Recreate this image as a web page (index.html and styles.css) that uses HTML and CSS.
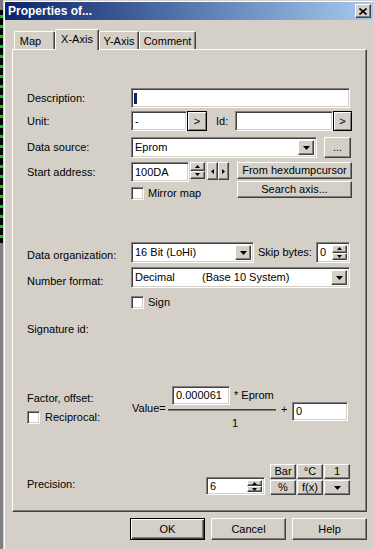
FILE: index.html
```html
<!DOCTYPE html>
<html>
<head>
<meta charset="utf-8">
<link rel="stylesheet" href="styles.css">
</head>
<body>
<div class="screen">
  <div class="strip"></div>
  <div class="window">
    <div class="frame">
      <div class="titlebar">
        <span class="title">Properties of...</span>
        <div class="close raised"><svg width="8" height="7" viewBox="0 0 8 7"><path d="M0.5 0.5 L7.5 6.5 M7.5 0.5 L0.5 6.5" stroke="#000" stroke-width="1.6" fill="none"/></svg></div>
      </div>
      <div class="client">
        <div class="tabs">
          <div class="tab tab-map">Map</div>
          <div class="tab active tab-x">X-Axis</div>
          <div class="tab tab-y">Y-Axis</div>
          <div class="tab tab-c">Comment</div>
        </div>
        <div class="panel">
          <div class="row r-desc">
            <div class="lbl">Description:</div>
            <div class="sunken field w-desc"><span class="caret"></span></div>
          </div>
          <div class="row r-unit">
            <div class="lbl">Unit:</div>
            <div class="sunken field w-unit"><span class="txt">-</span></div>
            <div class="btn focus w-gt">&gt;</div>
            <div class="lbl-id">Id:</div>
            <div class="sunken field w-id"></div>
            <div class="btn focus w-gt2">&gt;</div>
          </div>
          <div class="row r-ds">
            <div class="lbl">Data source:</div>
            <div class="sunken combo w-ds">
              <span class="txt">Eprom</span>
              <div class="raised ddbtn"><svg width="7" height="4" viewBox="0 0 7 4"><polygon points="0,0 7,0 3.5,4" fill="#000"/></svg></div>
            </div>
            <div class="btn raised w-dots">...</div>
          </div>
          <div class="row r-start">
            <div class="lbl lbl-start">Start address:</div>
            <div class="start-block">
              <div class="start-line">
                <div class="sunken field w-start"><span class="txt">100DA</span></div>
                <div class="spin ext">
                  <div class="raised sbtn"><svg width="5" height="3" viewBox="0 0 5 3"><polygon points="2.5,0 5,3 0,3" fill="#000"/></svg></div>
                  <div class="raised sbtn"><svg width="5" height="3" viewBox="0 0 5 3"><polygon points="0,0 5,0 2.5,3" fill="#000"/></svg></div>
                </div>
                <div class="raised arrow a-left"><svg width="3" height="5" viewBox="0 0 3 5"><polygon points="3,0 0,2.5 3,5" fill="#000"/></svg></div>
                <div class="raised arrow"><svg width="3" height="5" viewBox="0 0 3 5"><polygon points="0,0 3,2.5 0,5" fill="#000"/></svg></div>
              </div>
              <div class="check-line">
                <div class="sunken chk"></div><span class="chk-lbl">Mirror map</span>
              </div>
            </div>
            <div class="side-btns">
              <div class="btn raised w-side">From hexdumpcursor</div>
              <div class="btn raised w-side">Search axis...</div>
            </div>
          </div>
          <div class="row r-org">
            <div class="lbl lbl-low">Data organization:</div>
            <div class="sunken combo w-org">
              <span class="txt">16 Bit (LoHi)</span>
              <div class="raised ddbtn"><svg width="7" height="4" viewBox="0 0 7 4"><polygon points="0,0 7,0 3.5,4" fill="#000"/></svg></div>
            </div>
            <div class="lbl-skip">Skip bytes:</div>
            <div class="sunken combo w-skip">
              <span class="txt">0</span>
              <div class="spin">
                <div class="raised sbtn"><svg width="5" height="3" viewBox="0 0 5 3"><polygon points="2.5,0 5,3 0,3" fill="#000"/></svg></div>
                <div class="raised sbtn"><svg width="5" height="3" viewBox="0 0 5 3"><polygon points="0,0 5,0 2.5,3" fill="#000"/></svg></div>
              </div>
            </div>
          </div>
          <div class="row r-num">
            <div class="lbl lbl-low2">Number format:</div>
            <div class="sunken combo w-num">
              <span class="txt"><span class="dec">Decimal</span>(Base 10 System)</span>
              <div class="raised ddbtn"><svg width="7" height="4" viewBox="0 0 7 4"><polygon points="0,0 7,0 3.5,4" fill="#000"/></svg></div>
            </div>
          </div>
          <div class="row r-sign">
            <div class="lbl"></div>
            <div class="sunken chk"></div><span class="chk-lbl">Sign</span>
          </div>
          <div class="row r-sig">
            <div class="lbl">Signature id:</div>
          </div>
          <div class="row r-factor">
            <div class="factor-left">
              <div class="f-lbl">Factor, offset:</div>
              <div class="recip"><div class="sunken chk"></div><span class="recip-lbl">Reciprocal:</span></div>
            </div>
            <div class="value-eq">Value=</div>
            <div class="fraction">
              <div class="numer">
                <div class="sunken field w-factor"><span class="txt">0.000061</span></div>
                <span class="eprom">* Eprom</span>
              </div>
              <div class="fline"></div>
              <div class="denom">1</div>
            </div>
            <div class="plus">+</div>
            <div class="sunken field w-offset"><span class="txt">0</span></div>
          </div>
          <div class="row r-prec">
            <div class="lbl lbl-prec">Precision:</div>
            <div class="sunken combo w-prec">
              <span class="txt">6</span>
              <div class="spin">
                <div class="raised sbtn"><svg width="5" height="3" viewBox="0 0 5 3"><polygon points="2.5,0 5,3 0,3" fill="#000"/></svg></div>
                <div class="raised sbtn"><svg width="5" height="3" viewBox="0 0 5 3"><polygon points="0,0 5,0 2.5,3" fill="#000"/></svg></div>
              </div>
            </div>
            <div class="units">
              <div class="raised ubtn">Bar</div>
              <div class="raised ubtn">°C</div>
              <div class="raised ubtn">1</div>
              <div class="raised ubtn">%</div>
              <div class="raised ubtn">f(x)</div>
              <div class="raised ubtn"><svg width="7" height="4" viewBox="0 0 7 4"><polygon points="0,0 7,0 3.5,4" fill="#000"/></svg></div>
            </div>
          </div>
        </div>
        <div class="buttons">
          <div class="btn default dbtn">OK</div>
          <div class="btn raised dbtn">Cancel</div>
          <div class="btn raised dbtn">Help</div>
        </div>
      </div>
    </div>
  </div>
</div>
</body>
</html>
```

FILE: styles.css
```css
* { box-sizing: border-box; }
html, body { margin: 0; padding: 0; }
body {
  width: 373px; height: 549px; overflow: hidden;
  background: #d4d0c8;
  font-family: "Liberation Sans", Arial, sans-serif;
  font-size: 11px; color: #000;
}
.screen { display: flex; height: 549px; }
.strip {
  width: 3px; flex: none;
  background:
    linear-gradient(to bottom, #7a7a7a 0 10px, transparent 10px 243px, #808080 243px),
    repeating-linear-gradient(to bottom, #000 0 5px, #19c319 5px 8px, #000 8px 10px);
}
.window { flex: 1; border-left: 1px solid #d4d0c8; border-top: 1px solid #d4d0c8; }
.frame { height: 100%; border-left: 1px solid #fff; border-top: 1px solid #fff; }

.raised {
  background: #d4d0c8;
  border: 1px solid; border-color: #fff #404040 #404040 #fff;
  box-shadow: inset -1px -1px #808080;
}
.sunken {
  background: #fff;
  border: 1px solid; border-color: #808080 #fff #fff #808080;
  box-shadow: inset 1px 1px #404040, inset -1px -1px #d4d0c8;
}

.titlebar {
  height: 18px;
  background: linear-gradient(to right, #0a246a, #a6caf0);
  display: flex; align-items: center; justify-content: space-between;
  padding: 0 2px 0 3px;
}
.title { color: #fff; font-weight: bold; font-size: 12px; }
.close { width: 16px; height: 14px; display: flex; align-items: center; justify-content: center; }

.client { padding-left: 7px; }
.tabs { display: flex; align-items: flex-end; height: 29px; padding-left: 2px; }
.tab {
  height: 18px;
  border: 1px solid; border-bottom: none;
  border-color: #fff #404040 transparent #fff;
  box-shadow: inset -1px 0 #808080;
  border-radius: 2px 2px 0 0;
  display: flex; align-items: center; justify-content: center;
  background: #d4d0c8;
}
.tab.active { height: 21px; margin-bottom: -1px; position: relative; z-index: 1; padding-bottom: 3px; }
.tab-map { width: 41px; padding-right: 8px; }
.tab-x { width: 44px; }
.tab-y { width: 40px; }
.tab-c { width: 57px; }

.panel {
  width: 355px; height: 463px;
  border: 1px solid; border-color: #fff #404040 #404040 #fff;
  box-shadow: inset -1px -1px #808080;
  padding-left: 14px;
  display: flex; flex-direction: column;
}
.row { display: flex; align-items: center; flex: none; }
.lbl { width: 104px; flex: none; line-height: 13px; }

.field { height: 20px; display: flex; align-items: center; flex: none; }
.txt { padding-left: 3px; line-height: 13px; white-space: pre; }
.combo { height: 21px; display: flex; align-items: center; justify-content: space-between; padding: 2px; flex: none; }
.combo .txt { padding-left: 1px; }
.ddbtn { width: 16px; height: 100%; display: flex; align-items: center; justify-content: center; }

.btn { display: flex; align-items: center; justify-content: center; flex: none; line-height: 13px; }
.focus {
  background: #d4d0c8; border: 1px solid #000;
  box-shadow: inset 1px 1px #fff, inset -1px -1px #808080;
}
.default {
  background: #d4d0c8; border: 1px solid #000;
  box-shadow: inset 1px 1px #fff, inset -1px -1px #404040, inset -2px -2px #808080;
}

.r-desc { margin-top: 38px; height: 20px; }
.w-desc { width: 219px; }
.caret { width: 3px; height: 11px; margin-left: 2px; background: #0a246a; }

.r-unit { margin-top: 3px; height: 20px; }
.w-unit { width: 56px; }
.w-gt { width: 20px; height: 20px; }
.lbl-id { margin-left: 9px; width: 19px; }
.w-id { width: 98px; }
.w-gt2 { width: 19px; height: 20px; }

.r-ds { margin-top: 6px; height: 21px; }
.w-ds { width: 186px; }
.w-dots { width: 27px; height: 21px; margin-left: 7px; }

.r-start { margin-top: 4px; height: 38px; align-items: flex-start; }
.lbl-start { height: 20px; display: flex; align-items: center; }
.start-block { display: flex; flex-direction: column; width: 98px; flex: none; }
.start-line { display: flex; align-items: flex-start; }
.w-start { width: 58px; }
.spin { display: flex; flex-direction: column; width: 15px; height: 100%; flex: none; }
.spin.ext { height: 17px; margin-left: 1px; }
.sbtn { flex: 1; display: flex; align-items: center; justify-content: center; }
.arrow { width: 11px; height: 18px; display: flex; align-items: center; justify-content: center; flex: none; }
.a-left { margin-left: 2px; }
.check-line { display: flex; align-items: center; margin-top: 5px; }
.chk { width: 13px; height: 13px; flex: none; }
.chk-lbl { margin-left: 4px; line-height: 13px; }
.side-btns { display: flex; flex-direction: column; gap: 2px; margin-left: 8px; }
.w-side { width: 115px; height: 17px; }

.r-org { margin-top: 42px; height: 21px; }
.lbl-low { padding-top: 6px; }
.w-org { width: 123px; }
.lbl-skip { margin-left: 4px; width: 58px; line-height: 13px; }
.w-skip { width: 34px; padding: 2px 2px 2px 2px; }

.r-num { margin-top: 4px; height: 21px; }
.lbl-low2 { padding-top: 7px; }
.w-num { width: 219px; }
.dec { display: inline-block; width: 67px; }

.r-sign { margin-top: 8px; height: 13px; }
.r-sig { margin-top: 14px; height: 13px; }

.r-factor { margin-top: 50px; height: 42px; align-items: flex-start; }
.factor-left { width: 104px; flex: none; display: flex; flex-direction: column; }
.f-lbl { margin-top: 6px; line-height: 13px; }
.recip { display: flex; align-items: center; margin-top: 6px; }
.recip-lbl { margin-left: 5px; line-height: 13px; }
.value-eq { margin-left: 1px; width: 36px; margin-top: 16px; line-height: 13px; flex: none; }
.fraction { width: 108px; flex: none; display: flex; flex-direction: column; }
.numer { display: flex; align-items: center; padding-left: 4px; height: 19px; }
.w-factor { width: 58px; height: 19px; }
.eprom { margin-left: 4px; line-height: 13px; }
.fline { margin-top: 4px; height: 2px; border-top: 1px solid #404040; border-bottom: 1px solid #808080; }
.denom { margin-top: 6px; padding-left: 64px; line-height: 13px; }
.plus { margin-left: 5px; width: 11px; margin-top: 17px; line-height: 13px; flex: none; }
.w-offset { width: 56px; height: 19px; margin-top: 16px; }

.r-prec { margin-top: 36px; height: 31px; align-items: flex-start; }
.lbl-prec { margin-top: 14px; }
.w-prec { width: 59px; height: 18px; margin-left: 75px; margin-top: 13px; }
.units {
  display: grid; grid-template-columns: repeat(3, 26px); grid-template-rows: 15px 15px;
  gap: 1px; margin-left: 5px;
}
.ubtn { display: flex; align-items: center; justify-content: center; line-height: 13px; }

.buttons { display: flex; gap: 6px; margin-top: 6px; padding-left: 118px; }
.dbtn { width: 75px; height: 22px; }
```
